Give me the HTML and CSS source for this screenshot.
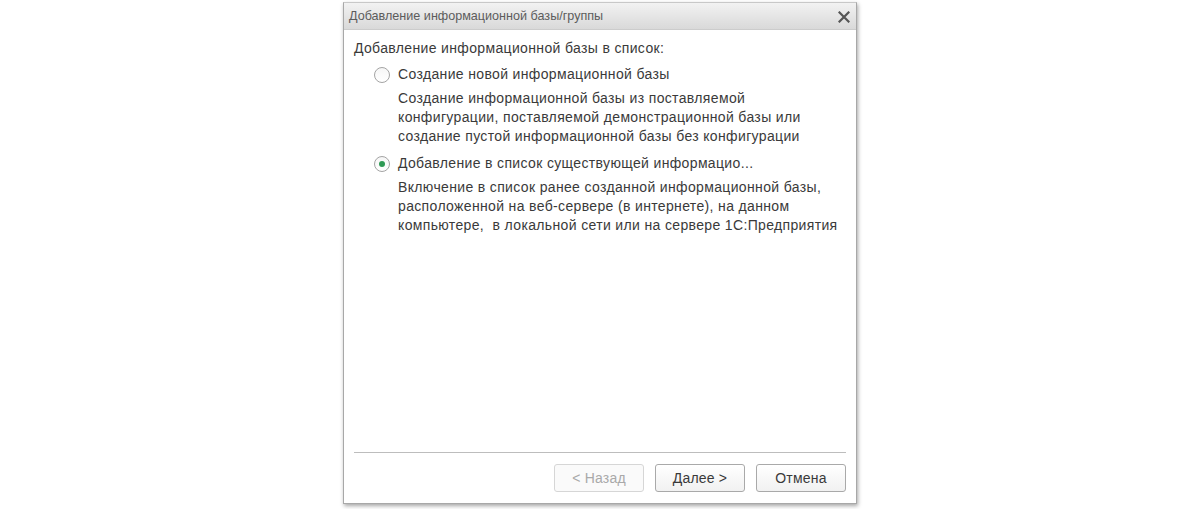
FILE: index.html
```html
<!DOCTYPE html>
<html lang="ru">
<head>
<meta charset="utf-8">
<title>Добавление информационной базы/группы</title>
<link rel="stylesheet" href="styles.css">
</head>
<body>
<div class="stage">
  <div class="dialog">
    <div class="titlebar">
      <span class="title">Добавление информационной базы/группы</span>
      <svg class="close" width="12" height="12" viewBox="0 0 12 12"><path d="M1.5 1.5 L10.5 10.5 M10.5 1.5 L1.5 10.5" stroke="#555" stroke-width="2.2" stroke-linecap="square"/></svg>
    </div>
    <div class="body">
      <div class="heading">Добавление информационной базы в список:</div>
      <div class="option first">
        <span class="radio"></span>
        <span class="label">Создание новой информационной базы</span>
      </div>
      <div class="desc">
        <div>Создание информационной базы из поставляемой</div>
        <div>конфигурации, поставляемой демонстрационной базы или</div>
        <div>создание пустой информационной базы без конфигурации</div>
      </div>
      <div class="option">
        <span class="radio checked"></span>
        <span class="label">Добавление в список существующей информацио...</span>
      </div>
      <div class="desc">
        <div>Включение в список ранее созданной информационной базы,</div>
        <div>расположенной на веб-сервере (в интернете), на данном</div>
        <div>компьютере,&nbsp; в локальной сети или на сервере 1С:Предприятия</div>
      </div>
    </div>
    <div class="footer">
      <div class="buttons">
        <button class="btn disabled" disabled>&lt; Назад</button>
        <button class="btn">Далее &gt;</button>
        <button class="btn">Отмена</button>
      </div>
    </div>
  </div>
</div>
</body>
</html>
```
FILE: styles.css
```css
html, body {
  margin: 0;
  padding: 0;
  background: #ffffff;
  height: 100%;
}
body {
  font-family: "Liberation Sans", Arial, sans-serif;
  color: #3a3a3a;
}
.stage {
  display: flex;
  justify-content: center;
  padding-top: 2px;
}
.dialog {
  width: 512px;
  height: 500px;
  border: 1px solid #a8a8a8;
  border-top-color: #c8c8c8;
  background: #ffffff;
  box-shadow: 1px 2px 4px rgba(0,0,0,0.35);
  display: flex;
  flex-direction: column;
}
.titlebar {
  height: 26px;
  flex: none;
  display: flex;
  align-items: center;
  justify-content: space-between;
  padding: 0 6px 0 5px;
  background: linear-gradient(#f2f2f2, #d9d9d9);
  border-bottom: 1px solid #cccccc;
}
.title {
  font-size: 12.6px;
  color: #5c5c5c;
}
.close {
  display: block;
  margin-top: 1px;
}
.body {
  flex: 1;
  padding: 9px 10px 0 10px;
  font-size: 14px;
  letter-spacing: 0.35px;
  line-height: 19px;
  color: #3a3a3a;
}
.option {
  display: flex;
  align-items: center;
  margin-left: 20px;
  margin-top: 8px;
  height: 19px;
}
.option.first {
  margin-top: 7px;
}
.radio {
  width: 14px;
  height: 14px;
  border: 1px solid #a4a4a4;
  border-radius: 50%;
  background: linear-gradient(#f6f6f6, #ffffff);
  margin-right: 8px;
  display: flex;
  align-items: center;
  justify-content: center;
  flex: none;
}
.radio.checked::after {
  content: "";
  width: 6px;
  height: 6px;
  border-radius: 50%;
  background: #2f9a55;
}
.desc {
  margin-left: 44px;
  margin-top: 5px;
}
.footer {
  flex: none;
  margin: 0 10px;
  border-top: 1px solid #bdbdbd;
  padding: 11px 0 11px;
}
.buttons {
  display: flex;
  justify-content: flex-end;
  gap: 11px;
}
.btn {
  width: 90px;
  height: 28px;
  border: 1px solid #a9a9a9;
  border-radius: 3px;
  background: linear-gradient(#ffffff, #f1f1f1);
  font-family: "Liberation Sans", Arial, sans-serif;
  font-size: 14px;
  letter-spacing: 0.2px;
  color: #3a3a3a;
  padding: 0;
}
.btn.disabled {
  border-color: #d6d6d6;
  color: #a9a9a9;
  background: #fafafa;
}
```
